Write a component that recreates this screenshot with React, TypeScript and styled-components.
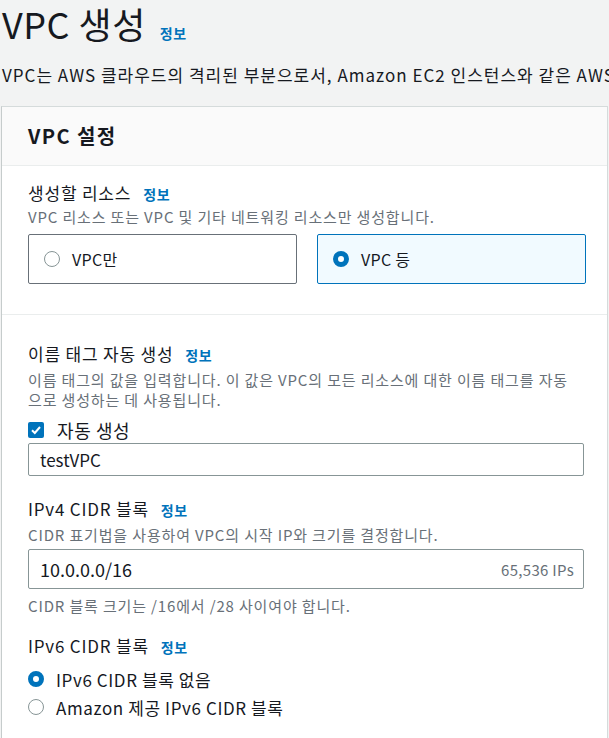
import styled, { createGlobalStyle } from 'styled-components';

const GlobalStyle = createGlobalStyle`
  html, body {
    margin: 0;
    padding: 0;
    background-color: #f2f3f3;
    overflow: hidden;
  }
  body {
    font-family: 'Noto Sans CJK KR', 'Noto Sans', sans-serif;
    color: #16191f;
  }
  * {
    box-sizing: border-box;
  }
`;

const Page = styled.div`
  width: 609px;
  padding: 2px 0 0 1px;
  overflow: hidden;
`;

const TitleRow = styled.div`
  display: flex;
  align-items: baseline;
  gap: 14px;
  padding-left: 1px;
  height: 42px;
`;

const Title = styled.h1`
  margin: 0;
  font-size: 36px;
  font-weight: 400;
  line-height: 42px;
  letter-spacing: 0.5px;
`;

const InfoLink = styled.a`
  color: #0073bb;
  font-size: 14px;
  font-weight: 700;
  letter-spacing: 0.5px;
  text-decoration: none;
  cursor: pointer;
`;

const PageDesc = styled.p`
  margin: 20px 0 0 1px;
  font-size: 17px;
  line-height: 22px;
  letter-spacing: 1px;
  white-space: nowrap;
`;

const Card = styled.div`
  margin-top: 20px;
  width: 607px;
  background-color: #ffffff;
  border: 1px solid #d5dbdb;
  border-left-color: #c6cccc;
`;

const CardHeader = styled.div`
  height: 59px;
  display: flex;
  align-items: center;
  padding: 0 26px;
  background-color: #fafafa;
  border-bottom: 1px solid #eaeded;
`;

const CardTitle = styled.h2`
  margin: 0;
  font-size: 20px;
  font-weight: 700;
  line-height: 24px;
  letter-spacing: 1.4px;
`;

const Section = styled.div<{ $first?: boolean }>`
  padding: ${(p) => (p.$first ? '16px 22px 30px 26px' : '28px 24px 20px 26px')};
  & + & {
    border-top: 1px solid #eaeded;
  }
`;

const Field = styled.div<{ $gap?: number }>`
  margin-top: ${(p) => p.$gap ?? 0}px;
`;

const LabelRow = styled.div`
  display: flex;
  align-items: baseline;
  gap: 12px;
  font-size: 17px;
  line-height: 22px;
  letter-spacing: 0.8px;
`;

const Desc = styled.div<{ $gap?: number }>`
  margin-top: ${(p) => p.$gap ?? 0}px;
  font-size: 15px;
  line-height: 20px;
  letter-spacing: 0.85px;
  color: #687078;
`;

const Tiles = styled.div`
  display: grid;
  grid-template-columns: 269px 269px;
  gap: 20px;
  margin-top: 7px;
`;

const Tile = styled.label<{ $checked?: boolean }>`
  height: 50px;
  display: flex;
  align-items: center;
  gap: 12px;
  padding: 0 15px;
  border: 1px solid ${(p) => (p.$checked ? '#0073bb' : '#687078')};
  background-color: ${(p) => (p.$checked ? '#f1faff' : '#ffffff')};
  border-radius: 2px;
  font-size: 16px;
  letter-spacing: 0.3px;
`;

const Radio = styled.span<{ $checked?: boolean }>`
  flex: none;
  width: 16px;
  height: 16px;
  border-radius: 50%;
  border: ${(p) => (p.$checked ? '5px solid #0073bb' : '1.5px solid #879596')};
  background-color: #ffffff;
`;

const CheckRow = styled.label`
  display: flex;
  align-items: center;
  gap: 13px;
  height: 24px;
  margin-top: 8px;
  font-size: 18px;
  letter-spacing: 0.6px;
`;

const CheckBox = styled.span`
  flex: none;
  width: 16px;
  height: 16px;
  border-radius: 2px;
  background-color: #0073bb;
  display: flex;
  align-items: center;
  justify-content: center;
`;

const InputBox = styled.div<{ $tall?: boolean; $gap?: number }>`
  margin-top: ${(p) => p.$gap ?? 1}px;
  height: ${(p) => (p.$tall ? '40px' : '33px')};
  width: 556px;
  display: flex;
  align-items: center;
  justify-content: space-between;
  padding: 0 9px 0 11px;
  border: 1px solid #879596;
  border-radius: 2px;
  background-color: #ffffff;
  font-size: ${(p) => (p.$tall ? '18px' : '17px')};
`;

const Suffix = styled.span`
  font-size: 15px;
  letter-spacing: 0.3px;
  color: #687078;
`;

const RadioRow = styled.label<{ $gap?: number }>`
  display: flex;
  align-items: center;
  gap: 12px;
  height: 24px;
  margin-top: ${(p) => p.$gap ?? 0}px;
  font-size: 17px;
  letter-spacing: 0.6px;
`;

export default function App() {
  return (
    <Page>
      <GlobalStyle />
      <TitleRow>
        <Title>VPC 생성</Title>
        <InfoLink>정보</InfoLink>
      </TitleRow>
      <PageDesc>
        VPC는 AWS 클라우드의 격리된 부분으로서, Amazon EC2 인스턴스와 같은 AWS 객체로 채워져 있습니다.
      </PageDesc>
      <Card>
        <CardHeader>
          <CardTitle>VPC 설정</CardTitle>
        </CardHeader>
        <Section $first>
          <LabelRow>
            생성할 리소스 <InfoLink>정보</InfoLink>
          </LabelRow>
          <Desc $gap={2}>VPC 리소스 또는 VPC 및 기타 네트워킹 리소스만 생성합니다.</Desc>
          <Tiles>
            <Tile>
              <Radio />
              VPC만
            </Tile>
            <Tile $checked>
              <Radio $checked />
              VPC 등
            </Tile>
          </Tiles>
        </Section>
        <Section>
          <LabelRow>
            이름 태그 자동 생성 <InfoLink>정보</InfoLink>
          </LabelRow>
          <Desc $gap={4}>
            이름 태그의 값을 입력합니다. 이 값은 VPC의 모든 리소스에 대한 이름 태그를 자동
            <br />
            으로 생성하는 데 사용됩니다.
          </Desc>
          <CheckRow>
            <CheckBox>
              <svg width="12" height="12" viewBox="0 0 12 12">
                <path d="M2 6.2 L4.8 9 L10 3" stroke="#ffffff" strokeWidth="2" fill="none" />
              </svg>
            </CheckBox>
            자동 생성
          </CheckRow>
          <InputBox>testVPC</InputBox>

          <Field $gap={22}>
            <LabelRow>
              IPv4 CIDR 블록 <InfoLink>정보</InfoLink>
            </LabelRow>
            <Desc $gap={4}>CIDR 표기법을 사용하여 VPC의 시작 IP와 크기를 결정합니다.</Desc>
            <InputBox $tall $gap={4}>
              10.0.0.0/16
              <Suffix>65,536 IPs</Suffix>
            </InputBox>
            <Desc $gap={7}>CIDR 블록 크기는 /16에서 /28 사이여야 합니다.</Desc>
          </Field>

          <Field $gap={19}>
            <LabelRow>
              IPv6 CIDR 블록 <InfoLink>정보</InfoLink>
            </LabelRow>
            <RadioRow $gap={9}>
              <Radio $checked />
              IPv6 CIDR 블록 없음
            </RadioRow>
            <RadioRow $gap={4}>
              <Radio />
              Amazon 제공 IPv6 CIDR 블록
            </RadioRow>
          </Field>
        </Section>
      </Card>
    </Page>
  );
}
